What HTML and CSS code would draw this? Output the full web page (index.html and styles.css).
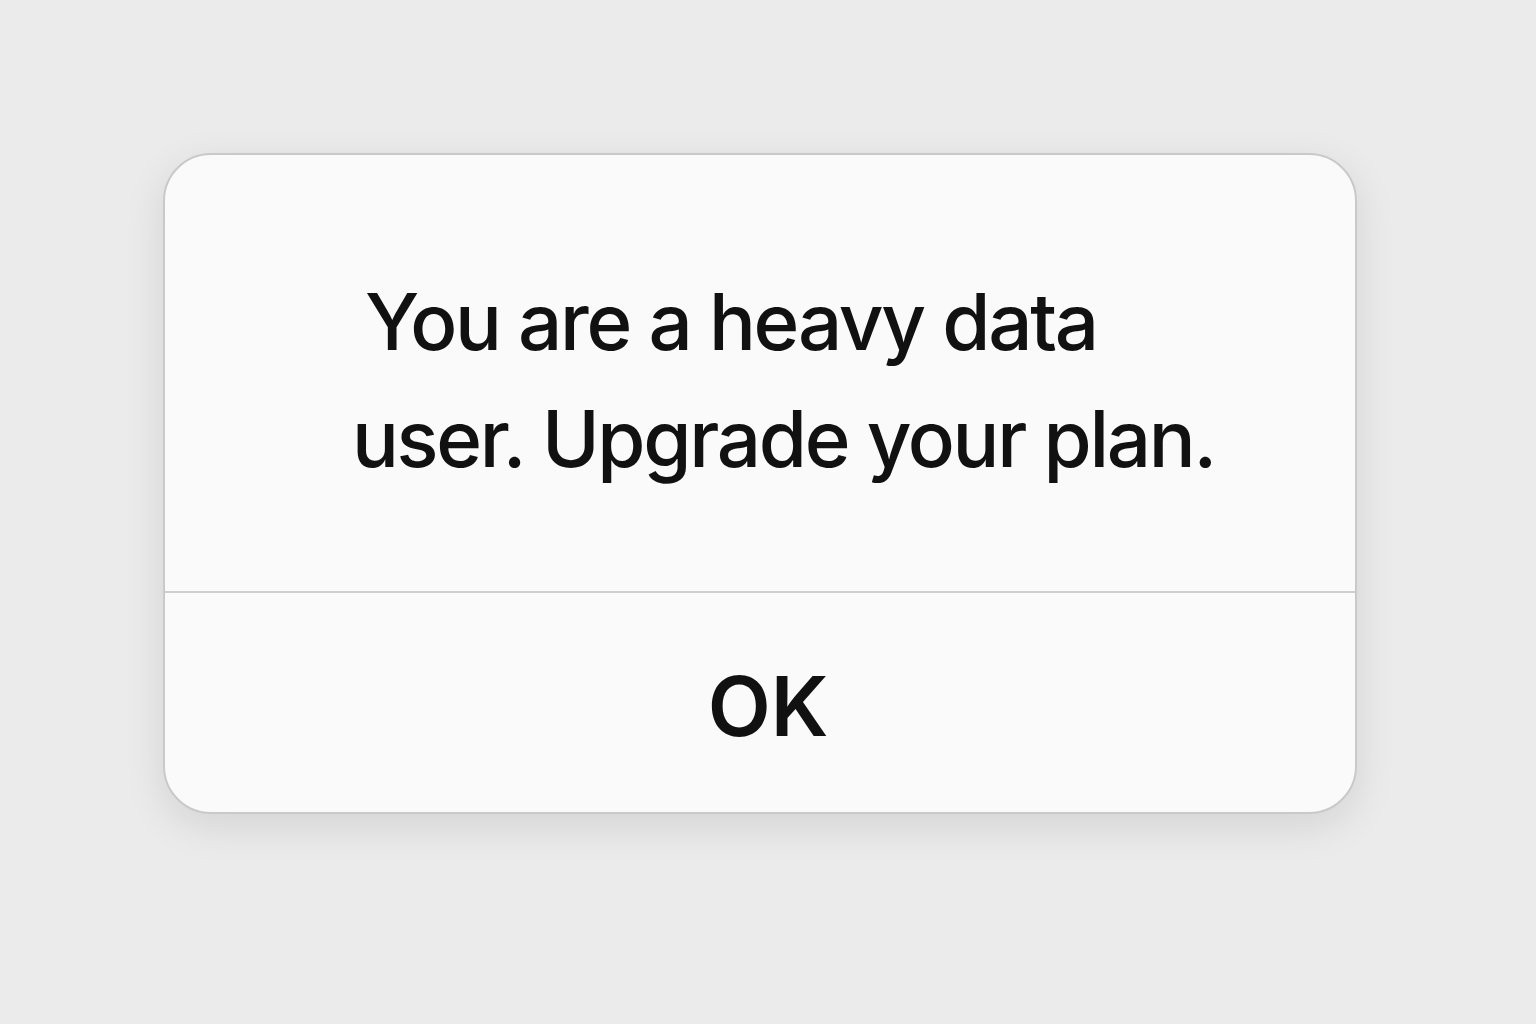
FILE: index.html
```html
<!DOCTYPE html>
<html>
<head>
<meta charset="utf-8">
<link rel="stylesheet" href="styles.css">
</head>
<body>
<div class="page">
  <div class="dialog">
    <div class="message">
      <p class="line first">You are a heavy data</p>
      <p class="line">user. Upgrade your plan.</p>
    </div>
    <div class="actions">
      <button class="ok">OK</button>
    </div>
  </div>
</div>
</body>
</html>
```
FILE: styles.css
```css
html, body {
  margin: 0;
  padding: 0;
  background: #ebebeb;
}
.page {
  width: 1536px;
  height: 1024px;
  box-sizing: border-box;
  padding: 153px 0 0 163px;
}
.dialog {
  width: 1194px;
  height: 661px;
  box-sizing: border-box;
  background: #fafafa;
  border: 2px solid #c9c9c9;
  border-radius: 48px;
  box-shadow: 0 12px 40px rgba(0,0,0,0.10);
  display: flex;
  flex-direction: column;
  overflow: hidden;
  font-family: Inter, "Liberation Sans", sans-serif;
  color: #111;
}
.message {
  height: 438px;
  box-sizing: border-box;
  padding: 108px 0 0 187px;
  border-bottom: 2px solid #cfcfcf;
}
.line {
  margin: 0;
  font-size: 78px;
  line-height: 117px;
  font-weight: 500;
  letter-spacing: -2.3px;
  white-space: nowrap;
}
.line.first {
  padding-left: 13px;
}
.actions {
  flex: 1;
  display: flex;
  align-items: center;
  justify-content: center;
}
.ok {
  background: none;
  border: none;
  font-family: Inter, "Liberation Sans", sans-serif;
  font-size: 82px;
  font-weight: 600;
  color: #111;
  padding: 0;
  margin: 8px 0 0 16px;
}
```
